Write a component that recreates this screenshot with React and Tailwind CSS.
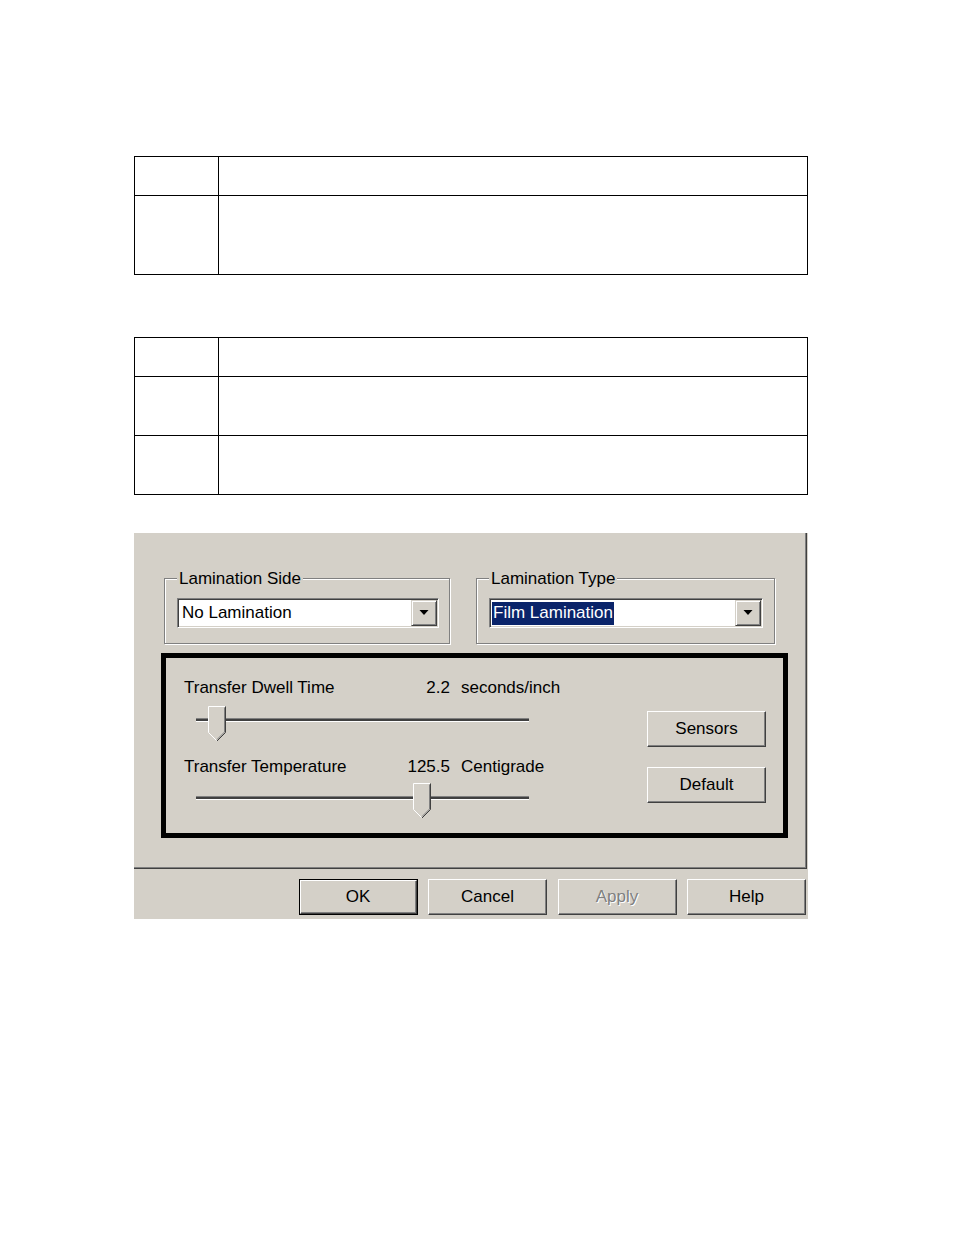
import React from 'react';

const raised = "border border-t-white border-l-white border-r-[#404040] border-b-[#404040] shadow-[inset_-1px_-1px_0_#808080]";
const sunken = "border border-t-[#808080] border-l-[#808080] border-r-white border-b-white shadow-[inset_1px_1px_0_#404040,inset_-1px_-1px_0_#d4d0c8]";

function Table({ rows }) {
  return (
    <div className="w-[674px] border border-black">
      {rows.map((h, i) => (
        <div key={i} className={`flex ${i < rows.length - 1 ? 'border-b border-black' : ''}`} style={{ height: h }}>
          <div className="w-[84px] border-r border-black" />
          <div className="flex-1" />
        </div>
      ))}
    </div>
  );
}

function WinButton({ children, disabled, isDefault }) {
  const body = (
    <div className={`${raised} w-full h-full flex items-center justify-center`}>
      <span className={disabled ? 'text-[#808080] [text-shadow:1px_1px_0_#fff]' : 'text-black'}>{children}</span>
    </div>
  );
  if (isDefault) {
    return <div className="w-[119px] h-[36px] border border-black">{body}</div>;
  }
  return <div className="w-[119px] h-[36px]">{body}</div>;
}

function GroupBox({ label, width, comboWidth, children }) {
  return (
    <div className="relative h-[66px] border border-[#808080] shadow-[1px_1px_0_#fff,inset_1px_1px_0_#fff]" style={{ width }}>
      <span className="absolute left-[12px] -top-[10px] bg-[#d4d0c8] px-[2px] leading-[20px]">{label}</span>
      <div className={`${sunken} mt-[19px] ml-[12px] h-[30px] bg-white p-[1px] flex`} style={{ width: comboWidth }}>
        <div className="flex-1 flex items-center overflow-hidden">{children}</div>
        <div className="w-[26px] h-full border border-t-[#d4d0c8] border-l-[#d4d0c8] border-r-[#404040] border-b-[#404040] shadow-[inset_1px_1px_0_#fff,inset_-1px_-1px_0_#808080] bg-[#d4d0c8] flex items-center justify-center">
          <svg width="10" height="6" viewBox="0 0 10 6"><path d="M0.5 0 H9.5 L5 5 Z" fill="#000" /></svg>
        </div>
      </div>
    </div>
  );
}

function Thumb() {
  return (
    <svg width="19" height="36" viewBox="0 0 19 36">
      <path d="M0.5 0.5 H17.5 V26.5 L9 35 L0.5 26.5 Z" fill="#d4d0c8" />
      <path d="M0.5 26.5 V0.5 H17" stroke="#fff" fill="none" />
      <path d="M0.5 26.5 L8.5 34.5" stroke="#fff" fill="none" />
      <path d="M17.5 0.5 V26.5 L9 35" stroke="#404040" fill="none" />
      <path d="M16.5 1.5 V26 L9 33.5" stroke="#808080" fill="none" />
    </svg>
  );
}

function Slider({ thumbLeft, thumbTop, className }) {
  return (
    <div className={`relative w-[333px] h-[36px] ml-[12px] pt-[13px] ${className}`}>
      <div className="h-[4px] border-t border-b border-t-[#808080] border-b-white bg-[#404040]" />
      <div className="absolute" style={{ left: thumbLeft, top: thumbTop }}>
        <Thumb />
      </div>
    </div>
  );
}

export default function App() {
  return (
    <div className="w-[954px] h-[1235px] bg-white pt-[156px] pl-[134px] font-['Liberation_Sans',Arial,sans-serif] text-[17px] leading-[20px] text-black">
      <Table rows={[39, 78]} />
      <div className="mt-[62px]">
        <Table rows={[39, 59, 58]} />
      </div>

      <div className="mt-[38px] w-[674px] h-[386px] bg-[#d4d0c8] flex flex-col">
        <div className="w-[673px] h-[336px] border-r border-b border-[#404040] shadow-[inset_-1px_-1px_0_#808080] pl-[27px] pt-[45px]">
          <div className="ml-[3px] flex gap-[26px]">
            <GroupBox label="Lamination Side" width={286} comboWidth={262}>
              <span className="pl-[3px]">No Lamination</span>
            </GroupBox>
            <GroupBox label="Lamination Type" width={299} comboWidth={274}>
              <span className="ml-[1px] px-[1px] h-[23px] flex items-center bg-[#0a246a] text-white">Film Lamination</span>
            </GroupBox>
          </div>

          <div className="mt-[9px] w-[627px] h-[185px] border-[5px] border-black flex">
            <div className="flex-1 pl-[18px] pt-[20px]">
              <div className="flex h-[20px]">
                <div className="w-[266px] flex justify-between">
                  <span>Transfer Dwell Time</span>
                  <span>2.2</span>
                </div>
                <span className="ml-[11px]">seconds/inch</span>
              </div>
              <Slider thumbLeft={12} thumbTop={1} className="mt-[7px]" />
              <div className="flex h-[20px] mt-[16px]">
                <div className="w-[266px] flex justify-between">
                  <span>Transfer Temperature</span>
                  <span>125.5</span>
                </div>
                <span className="ml-[11px]">Centigrade</span>
              </div>
              <Slider thumbLeft={217} thumbTop={0} className="mt-[6px]" />
            </div>
            <div className="w-[119px] mr-[17px] pt-[53px] flex flex-col gap-[20px]">
              <WinButton>Sensors</WinButton>
              <WinButton>Default</WinButton>
            </div>
          </div>
        </div>

        <div className="h-[50px] flex justify-end items-start pt-[10px] pr-[2px] gap-[10.5px]">
          <WinButton isDefault>OK</WinButton>
          <WinButton>Cancel</WinButton>
          <WinButton disabled>Apply</WinButton>
          <WinButton>Help</WinButton>
        </div>
      </div>
    </div>
  );
}
